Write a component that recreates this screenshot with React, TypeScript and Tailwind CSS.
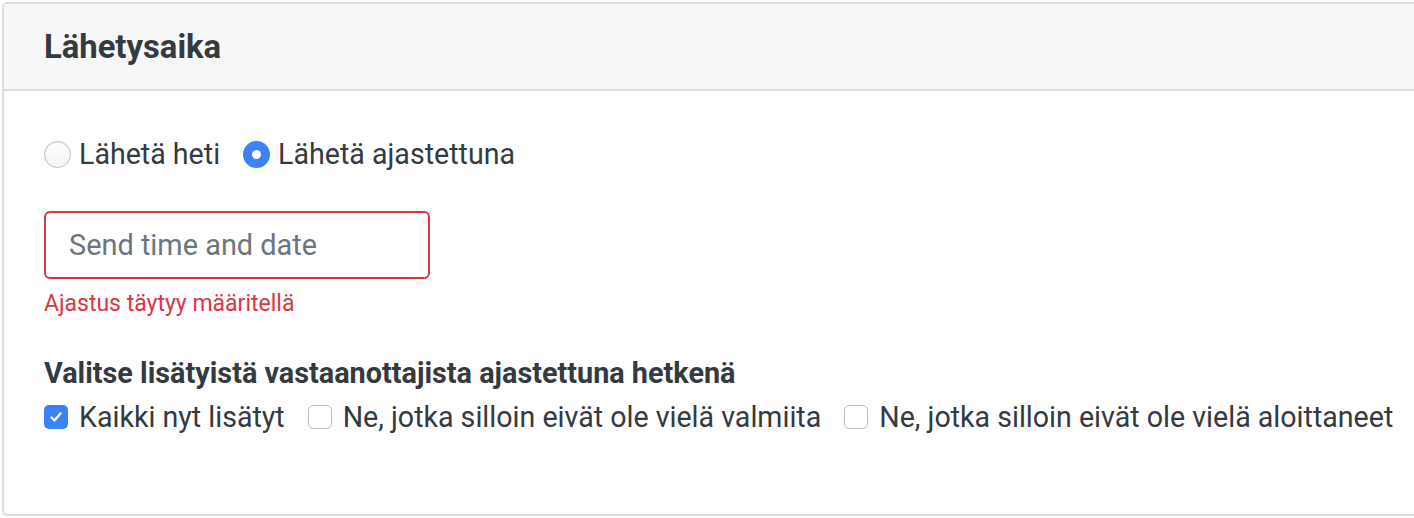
import { useState } from "react";

function Radio({ checked, label, onClick }: { checked: boolean; label: string; onClick: () => void }) {
  return (
    <label className="flex cursor-pointer items-center" onClick={onClick}>
      {checked ? (
        <span className="flex h-[27px] w-[27px] items-center justify-center rounded-full bg-[#3a83f6]">
          <span className="h-[9px] w-[9px] rounded-full bg-white" />
        </span>
      ) : (
        <span className="h-[27px] w-[27px] rounded-full border border-[#bdbdbd] bg-gradient-to-b from-white to-[#f4f4f4] shadow-[inset_0_1px_1px_rgba(0,0,0,0.06)]" />
      )}
      <span className="ml-[8px]">{label}</span>
    </label>
  );
}

function Checkbox({ checked, label, onClick }: { checked: boolean; label: string; onClick: () => void }) {
  return (
    <label className="flex cursor-pointer items-center" onClick={onClick}>
      {checked ? (
        <span className="flex h-[24px] w-[24px] items-center justify-center rounded-[5px] bg-[#3a83f6]">
          <svg width="16" height="16" viewBox="0 0 16 16" fill="none">
            <path d="M3.5 8.5l3 3 6-7" stroke="white" strokeWidth="2.4" strokeLinecap="round" strokeLinejoin="round" />
          </svg>
        </span>
      ) : (
        <span className="h-[24px] w-[24px] rounded-[5px] border border-[#bdbdbd] bg-white" />
      )}
      <span className="ml-[11px]">{label}</span>
    </label>
  );
}

export default function App() {
  const [mode, setMode] = useState<"now" | "scheduled">("scheduled");
  const [who, setWho] = useState({ all: true, notReady: false, notStarted: false });

  return (
    <div className="h-[518px] w-[1414px] overflow-hidden bg-white font-['Roboto','Liberation_Sans',sans-serif] text-[28.6px] leading-[42px] text-[#343a40]">
      <div className="ml-[2px] mt-[2px] h-[514px] w-[1450px] rounded-[5px] border-2 border-[#dddddd]">
        <div className="flex h-[87px] items-center border-b-2 border-[#dddddd] bg-[#f7f7f7] pl-[40px] pt-[1px]">
          <h5 className="text-[32.8px] font-bold leading-[42px]">Lähetysaika</h5>
        </div>
        <div className="pl-[40px] pt-[42px]">
          <div className="flex items-center gap-[23px]">
            <Radio checked={mode === "now"} label="Lähetä heti" onClick={() => setMode("now")} />
            <Radio checked={mode === "scheduled"} label="Lähetä ajastettuna" onClick={() => setMode("scheduled")} />
          </div>
          <input
            placeholder="Send time and date"
            className="mt-[36px] block h-[68px] w-[386px] rounded-[6px] border-2 border-[#dc3545] px-[23px] text-[28.9px] text-[#495057] outline-none placeholder:text-[#6c757d]"
          />
          <div className="mt-[8px] text-[23px] leading-[33px] text-[#dc3545]">Ajastus täytyy määritellä</div>
          <div className="mt-[32px] text-[28.8px] font-bold">Valitse lisätyistä vastaanottajista ajastettuna hetkenä</div>
          <div className="mt-[2px] flex items-center gap-[23px]">
            <Checkbox checked={who.all} label="Kaikki nyt lisätyt" onClick={() => setWho({ ...who, all: !who.all })} />
            <Checkbox
              checked={who.notReady}
              label="Ne, jotka silloin eivät ole vielä valmiita"
              onClick={() => setWho({ ...who, notReady: !who.notReady })}
            />
            <Checkbox
              checked={who.notStarted}
              label="Ne, jotka silloin eivät ole vielä aloittaneet"
              onClick={() => setWho({ ...who, notStarted: !who.notStarted })}
            />
          </div>
        </div>
      </div>
    </div>
  );
}
